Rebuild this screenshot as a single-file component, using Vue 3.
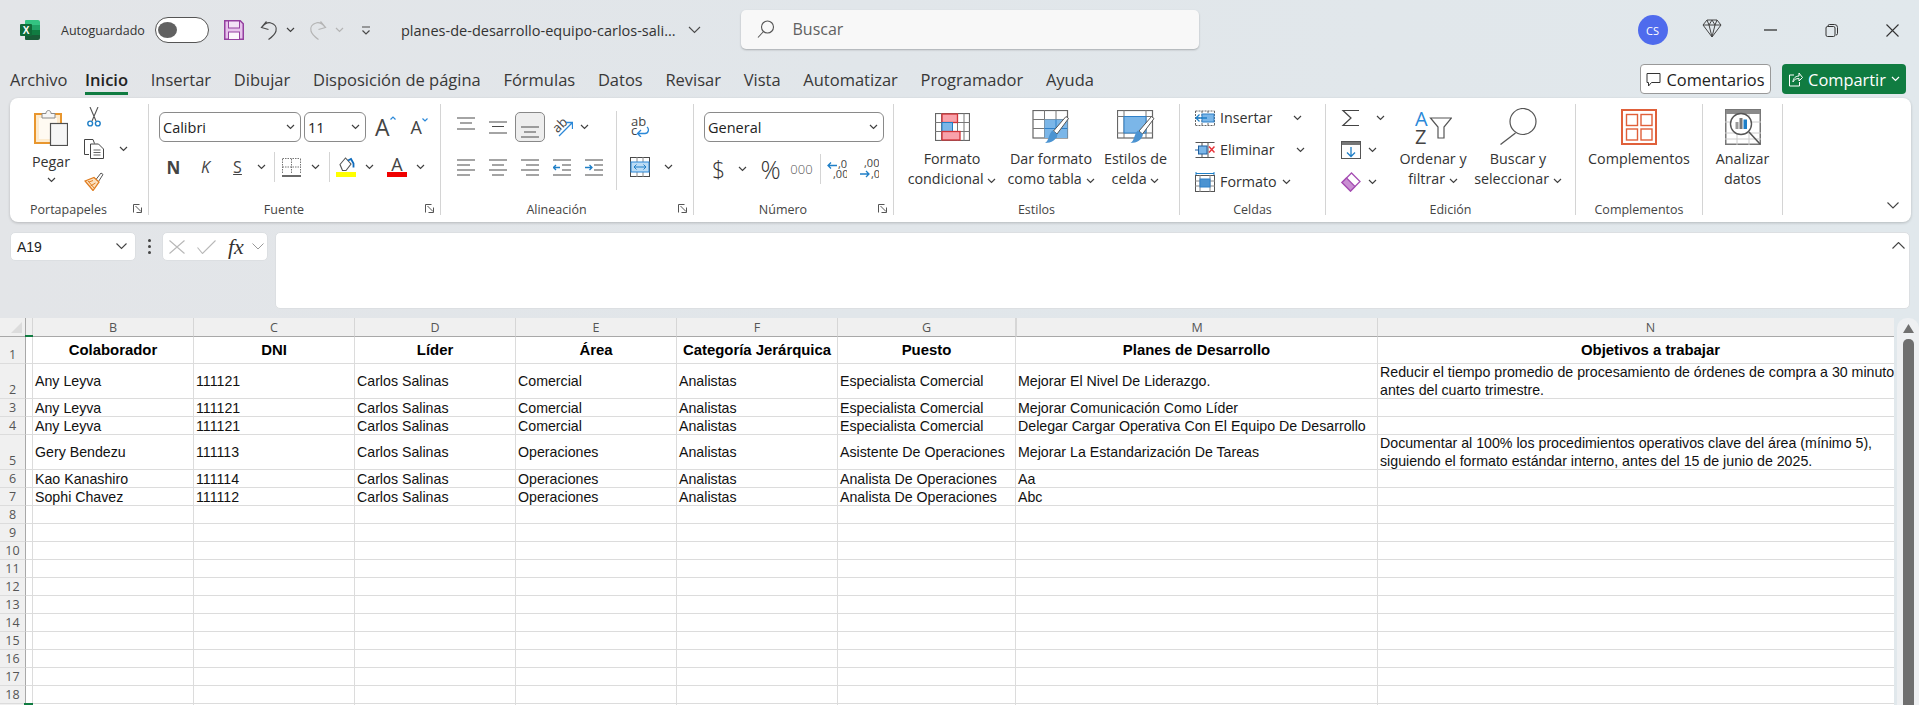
<script setup>
import { h } from 'vue'

const Chev = (p) =>
  h('svg', { width: 9, height: 6, viewBox: '0 0 9 6', class: 'chev' }, [
    h('path', { d: 'M1 1l3.5 3.5L8 1', fill: 'none', stroke: p.c || '#404040', 'stroke-width': 1.2 })
  ])
Chev.props = ['c']

const Ico = (p) =>
  h('svg', { width: p.w, height: p.h, viewBox: `0 0 ${p.w} ${p.h}` }, [
    h('path', { d: p.d, fill: 'none', stroke: p.s || '#4a4a4a', 'stroke-width': p.sw || 1.2 })
  ])
Ico.props = ['w', 'h', 'd', 's', 'sw']

const Launcher = () =>
  h('svg', { width: 10, height: 9, viewBox: '0 0 10 9', class: 'launcher' }, [
    h('path', { d: 'M.5 8.5V.5h6M2.5 2l5.5 5.5M8.5 3.5v5h-5', fill: 'none', stroke: '#555', 'stroke-width': 1 })
  ])

const tabs = ['Archivo', 'Inicio', 'Insertar', 'Dibujar', 'Disposición de página', 'Fórmulas', 'Datos', 'Revisar', 'Vista', 'Automatizar', 'Programador', 'Ayuda']

const rowHeads = ['1', '2', '3', '4', '5', '6', '7', '8', '9', '10', '11', '12', '13', '14', '15', '16', '17', '18', '19']
const colHeads = ['B', 'C', 'D', 'E', 'F', 'G', 'M', 'N']
const titles = ['Colaborador', 'DNI', 'Líder', 'Área', 'Categoría Jerárquica', 'Puesto', 'Planes de Desarrollo', 'Objetivos a trabajar']
const data = [
  ['Any Leyva', '111121', 'Carlos Salinas', 'Comercial', 'Analistas', 'Especialista Comercial', 'Mejorar El Nivel De Liderazgo.', 'Reducir el tiempo promedio de procesamiento de órdenes de compra a 30 minutos\nantes del cuarto trimestre.'],
  ['Any Leyva', '111121', 'Carlos Salinas', 'Comercial', 'Analistas', 'Especialista Comercial', 'Mejorar Comunicación Como Líder', ''],
  ['Any Leyva', '111121', 'Carlos Salinas', 'Comercial', 'Analistas', 'Especialista Comercial', 'Delegar Cargar Operativa Con El Equipo De Desarrollo', ''],
  ['Gery Bendezu', '111113', 'Carlos Salinas', 'Operaciones', 'Analistas', 'Asistente De Operaciones', 'Mejorar La Estandarización De Tareas', 'Documentar al 100% los procedimientos operativos clave del área (mínimo 5),\nsiguiendo el formato estándar interno, antes del 15 de junio de 2025.'],
  ['Kao Kanashiro', '111114', 'Carlos Salinas', 'Operaciones', 'Analistas', 'Analista De Operaciones', 'Aa', ''],
  ['Sophi Chavez', '111112', 'Carlos Salinas', 'Operaciones', 'Analistas', 'Analista De Operaciones', 'Abc', '']
]
while (data.length < 18) data.push(['', '', '', '', '', '', '', ''])
</script>

<template>
  <div class="app">
    <header class="titlebar">
      <svg class="t-excel" width="20" height="20" viewBox="0 0 20 20">
        <path d="M6 0h12a2 2 0 012 2v4H5V1a1 1 0 011-1z" fill="#33c481" />
        <rect x="5" y="5" width="15" height="5" fill="#21a366" />
        <rect x="5" y="10" width="15" height="5" fill="#107c41" />
        <path d="M5 15h15v3a2 2 0 01-2 2H6a1 1 0 01-1-1z" fill="#185c37" />
        <rect x="0" y="4" width="12" height="12" rx="1" fill="#0f6b38" />
        <text x="6" y="13.8" text-anchor="middle" class="t-x">X</text>
      </svg>
      <span class="t-auto">Autoguardado</span>
      <span class="toggle"><span class="knob"></span></span>
      <svg class="t-save" width="20" height="20" viewBox="0 0 20 20">
        <path d="M.75.75h15.500l3 3v15.500H.75z" fill="#e7c3ec" stroke="#94409f" stroke-width="1.500" />
        <rect x="4.500" y="1" width="11" height="7" fill="#f3e2f6" stroke="#94409f" />
        <rect x="4.500" y="12" width="11" height="7.500" fill="#fbf5fc" stroke="#94409f" />
      </svg>
      <Ico class="t-undo" :w="18" :h="20" d="M6.500 1.500L1.500 7.500l7 2M2 7c3-3.500 6-5 9-4 4 1.200 6 4.500 5 8-.8 3-4 6-7.500 8.500" />
      <Chev class="t-c1" />
      <Ico class="t-redo" :w="18" :h="20" s="#b4b4b4" d="M11.500 1.500l5 6-7 2M16 7c-3-3.500-6-5-9-4-4 1.200-6 4.500-5 8 .8 3 4 6 7.500 8.500" />
      <Chev class="t-c2" c="#b4b4b4" />
      <Ico class="t-cust" :w="10" :h="9" d="M1 1h8M1.500 4.500L5 8l3.500-3.500" />
      <span class="t-file">planes-de-desarrollo-equipo-carlos-sali...</span>
      <Ico class="t-filec" :w="13" :h="8" sw="1.100" d="M1 1l5.500 5.500L12 1" />
      <div class="search">
        <svg width="18" height="18" viewBox="0 0 18 18"><circle cx="10.500" cy="7" r="6" fill="none" stroke="#555" stroke-width="1.100" /><path d="M6.500 11.500L1 17.500" stroke="#555" stroke-width="1.100" /></svg>
        <span>Buscar</span>
      </div>
      <span class="avatar">CS</span>
      <svg class="t-gem" width="20" height="19" viewBox="0 0 20 19"><path d="M5 1h10l4 5-9 12L1 6zM1 6h18M7 6l3 12 3-12M5 1l2 5 3-5 3 5 2-5" fill="none" stroke="#444" stroke-width="1" /></svg>
      <Ico class="t-min" :w="13" :h="2" sw="1.300" s="#333" d="M0 1h13" />
      <svg class="t-rest" width="13" height="13" viewBox="0 0 13 13"><path d="M3 2.500V2a1.500 1.500 0 011.500-1.500h5A3 3 0 0112.500 3.500v6A1.500 1.500 0 0111 11M2.500 2.500h6A1.500 1.500 0 0110 4v7a1.500 1.500 0 01-1.500 1.500h-6A1.500 1.500 0 011 11V4a1.500 1.500 0 011.500-1.500z" fill="none" stroke="#333" /></svg>
      <Ico class="t-close" :w="13" :h="13" s="#333" sw="1.100" d="M.5.500l12 12M12.500.500l-12 12" />
    </header>

    <nav class="tabs">
      <a v-for="t in tabs" :key="t" class="tab" :class="{ active: t === 'Inicio' }">{{ t }}</a>
      <span class="comments">
        <svg width="15" height="15" viewBox="0 0 15 15"><path d="M1 1.500h13v9H5.500L2.500 14v-3.500H1z" fill="none" stroke="#333" /></svg>
        Comentarios
      </span>
      <span class="share">
        <svg width="15" height="16" viewBox="0 0 15 16"><path d="M6 4H1.500v11h10v-4M5 11c0-4 3-6 6-6V2l3.500 4.500L11 10V7.500c-3 0-5 1-6 3.500z" fill="none" stroke="#fff" /></svg>
        Compartir
        <Chev c="#fff" />
      </span>
    </nav>

    <section class="ribbon">
      <!-- Portapapeles -->
      <div class="group g-clip">
        <div class="body clip-body">
          <div class="paste">
            <svg width="34" height="38" viewBox="0 0 34 38">
              <rect x="1" y="6" width="26" height="29" fill="#fdebcf" stroke="#e8962e" stroke-width="2" />
              <rect x="5" y="10" width="18" height="21" fill="#fffaf2" />
              <path d="M8 10V5.500h4c0-4 5-4 5 0h4V10z" fill="#f6f6f6" stroke="#8a8a8a" />
              <rect x="16.500" y="15.500" width="17" height="22" fill="#f6f6f6" stroke="#505050" stroke-width="1.200" />
            </svg>
            <span class="lbl p-l">Pegar</span>
            <Chev />
          </div>
          <div class="clip-tools">
            <span class="ctool">
              <svg width="14" height="20" viewBox="0 0 14 20">
                <path d="M3 0l6 14M11 0L5 14" fill="none" stroke="#555" stroke-width="1.100" />
                <circle cx="3.200" cy="16.500" r="2.400" fill="none" stroke="#1f7fc7" stroke-width="1.400" />
                <circle cx="10.800" cy="16.500" r="2.400" fill="none" stroke="#1f7fc7" stroke-width="1.400" />
              </svg>
            </span>
            <span class="ctool">
              <svg width="20" height="20" viewBox="0 0 20 20">
                <path d="M5 15.500H.5V.5h8.500l1.500 4" fill="none" stroke="#444" />
                <path d="M6.500 5h8l5 5v9.500h-13z" fill="#fff" stroke="#444" />
                <path d="M9.500 11h7M9.500 13.500h7M9.500 16h7" stroke="#666" />
              </svg>
              <Chev class="c-copy" />
            </span>
            <span class="ctool">
              <svg width="20" height="19" viewBox="0 0 20 19">
                <path d="M12 7.500L17 1l2 1.500-4.500 7z" fill="#fff" stroke="#555" />
                <path d="M1 9l9-3.500 5 4.500-6 8.500L1 9z" fill="#fbe0bf" stroke="#e07c1e" stroke-width="1.300" />
                <path d="M5 10l4-1.500M6.500 14l5-3M4 9l7 8" stroke="#e07c1e" stroke-width="1" fill="none" />
              </svg>
            </span>
          </div>
        </div>
        <div class="g-label"><span>Portapapeles</span><Launcher /></div>
      </div>

      <!-- Fuente -->
      <div class="group g-font">
        <div class="body rows">
          <div class="row font-r1">
            <span class="select s-name"><span>Calibri</span><Chev /></span>
            <span class="select s-size"><span>11</span><Chev /></span>
            <span class="grow big-a">A<Ico :w="6" :h="4" s="#2b88d8" d="M.5 3.500L3 1l2.500 2.500" /></span>
            <span class="grow small-a">A<Ico :w="6" :h="4" s="#2b88d8" d="M.5.500L3 3 5.500.500" /></span>
          </div>
          <div class="row cols font-r2">
            <b class="fm-n">N</b>
            <i class="fm-k">K</i>
            <u class="fm-s">S</u>
            <Chev />
            <span class="vsep"></span>
            <svg width="19" height="19" viewBox="0 0 19 19">
              <path d="M.5 1v15M18.500 1v15M.5.500h18M.5 9h18M9.500 1v15" stroke="#777" stroke-dasharray="1.500 1" fill="none" />
              <path d="M0 18h19" stroke="#444" stroke-width="1.600" />
            </svg>
            <Chev />
            <span class="vsep"></span>
            <svg width="20" height="20" viewBox="0 0 20 20">
              <path d="M4 7.500L9.500 1l5.500 6-5 6.500H6.500z" fill="#fff" stroke="#555" stroke-width="1.100" />
              <path d="M12 3.500l3-1.500 2.500 4.500v4" fill="none" stroke="#0f6cbd" stroke-width="1.800" />
              <rect x="0" y="15" width="20" height="5" fill="#ffff00" />
            </svg>
            <Chev />
            <span class="fcolor">A<i></i></span>
            <Chev />
          </div>
        </div>
        <div class="g-label"><span>Fuente</span><Launcher /></div>
      </div>

      <!-- Alineación -->
      <div class="group g-align">
        <div class="body al-body">
          <div class="al-left rows">
            <div class="row cols al-r1">
              <Ico class="ia-top" :w="18" :h="13" d="M0 1h18M3 6h12M0 12h18" />
              <Ico :w="18" :h="13" d="M0 1h18M3 5.500h12M0 12h18" />
              <span class="pressed"><Ico :w="18" :h="12" d="M0 1h18M3 6h12M0 11h18" /></span>
              <svg width="20" height="22" viewBox="0 0 20 22">
                <text x="-1" y="14" transform="rotate(-45 6 9)" class="ab-t">ab</text>
                <path d="M6 20L19 7M13 6.500h6.500V13" fill="none" stroke="#2b88d8" stroke-width="1.300" />
              </svg>
              <Chev />
            </div>
            <div class="row cols al-r2">
              <Ico :w="18" :h="17" d="M0 1h18M0 6h13M0 11h18M0 16h13" />
              <Ico :w="18" :h="17" d="M0 1h18M3 6h12M0 11h18M3 16h12" />
              <Ico :w="18" :h="17" d="M0 1h18M5 6h13M0 11h18M5 16h13" />
              <svg width="18" height="17" viewBox="0 0 18 17"><path d="M0 1h18M9 6h9M9 11h9M0 16h18" stroke="#4a4a4a" stroke-width="1.200" fill="none" /><path d="M7 8.500H0M3 6L.5 8.500 3 11" stroke="#1f7fc7" stroke-width="1.300" fill="none" /></svg>
              <svg width="18" height="17" viewBox="0 0 18 17"><path d="M0 1h18M9 6h9M9 11h9M0 16h18" stroke="#4a4a4a" stroke-width="1.200" fill="none" /><path d="M0 8.500h7M4.500 6L7 8.500 4.500 11" stroke="#1f7fc7" stroke-width="1.300" fill="none" /></svg>
            </div>
          </div>
          <div class="al-right rows">
            <div class="row">
              <svg width="20" height="20" viewBox="0 0 20 20">
                <text x="1" y="9" class="ab-t">ab</text><text x="1" y="18" class="ab-t">c</text>
                <path d="M17 10c2.500 2 1.500 6.500-2 6.500H8M11 13l-3.500 3.500L11 20" fill="none" stroke="#2b88d8" stroke-width="1.300" />
              </svg>
            </div>
            <div class="row al-merge">
              <svg width="20" height="20" viewBox="0 0 20 20">
                <rect x=".5" y=".5" width="19" height="19" fill="#fff" stroke="#4a4a4a" />
                <path d="M7 0v5M13 0v5M7 15v5M13 15v5" stroke="#888" />
                <rect x="1" y="5" width="18" height="10" fill="#bcdcf5" stroke="#2b88d8" />
                <path d="M4 10h12M6.500 7.500L4 10l2.500 2.500M13.500 7.500L16 10l-2.500 2.500" fill="none" stroke="#1f7fc7" />
              </svg>
              <Chev class="merge-c" />
            </div>
          </div>
        </div>
        <div class="g-label"><span>Alineación</span><Launcher /></div>
      </div>

      <!-- Número -->
      <div class="group g-num">
        <div class="body rows">
          <div class="row">
            <span class="select s-gen"><span>General</span><Chev /></span>
          </div>
          <div class="row cols num-r2">
            <span class="n-dollar">$</span>
            <Chev />
            <span class="n-pct">%</span>
            <span class="n-000">000</span>
            <span class="vsep"></span>
            <svg width="20" height="20" viewBox="0 0 20 20">
              <text x="11" y="9" class="dec">,0</text><text x="6" y="19" class="dec">,00</text>
              <path d="M10 6.500H1M4 3.500l-3 3 3 3" fill="none" stroke="#1f7fc7" stroke-width="1.300" />
            </svg>
            <svg width="20" height="20" viewBox="0 0 20 20">
              <text x="5" y="8" class="dec">,00</text><text x="12" y="19" class="dec">,0</text>
              <path d="M1 15h9M7 12l3 3-3 3" fill="none" stroke="#1f7fc7" stroke-width="1.300" />
            </svg>
          </div>
        </div>
        <div class="g-label"><span>Número</span><Launcher /></div>
      </div>

      <!-- Estilos -->
      <div class="group g-styles">
        <div class="body bigs">
          <div class="big w-116">
            <span class="big-ic">
              <svg width="35" height="28" viewBox="0 0 35 28">
                <rect x=".5" y=".5" width="34" height="27" fill="#fff" stroke="#666" stroke-width="1.200" />
                <path d="M6.500 0v28M22.500 0v28M29 0v28M0 9.500h35M0 18.500h35" stroke="#777" />
                <rect x="7" y="1" width="15.500" height="8.500" fill="#f9a2aa" stroke="#d13438" stroke-width="1.300" />
                <rect x="7" y="9.500" width="10.500" height="9" fill="#7bb6e8" stroke="#1f7fc7" />
                <rect x="7" y="18.500" width="18" height="8.500" fill="#f9a2aa" stroke="#d13438" stroke-width="1.300" />
              </svg>
            </span>
            <span class="lbl">Formato</span>
            <span class="lbl">condicional <Chev /></span>
          </div>
          <div class="big w-82">
            <span class="big-ic">
              <svg width="38" height="34" viewBox="0 0 38 34">
                <rect x="1" y=".5" width="34.500" height="27.500" fill="#fff" stroke="#666" stroke-width="1.200" />
                <path d="M12.500 0v28M24 0v28M1 9.500h35M1 18.500h35" stroke="#777" />
                <rect x="12.500" y="9.500" width="23" height="18.500" fill="#7bb6e8" />
                <path d="M24 9.500V28M12.500 18.500h23" stroke="#2f80c8" />
                <path d="M36.500 8.500L25 24l-3.500-3L34 6.500z" fill="#fff" stroke="#555" />
                <path d="M20.500 20.500l5 4c-1 5-6 8.500-12.500 8.500 4-2 3.500-9.500 7.500-12.500z" fill="#4b93d1" />
              </svg>
            </span>
            <span class="lbl">Dar formato</span>
            <span class="lbl">como tabla <Chev /></span>
          </div>
          <div class="big w-87">
            <span class="big-ic">
              <svg width="38" height="34" viewBox="0 0 38 34">
                <rect x=".5" y=".5" width="35" height="27.500" fill="#fff" stroke="#666" stroke-width="1.200" />
                <path d="M7 0v28M29 0v28M0 6.500h36M0 23h36" stroke="#777" />
                <rect x="7" y="6.500" width="22" height="16.500" fill="#7bb6e8" stroke="#2f80c8" />
                <path d="M37 8.500L25.500 24 22 21 34.500 6.500z" fill="#fff" stroke="#555" />
                <path d="M21 20.500l5 4c-1 5-6 8.500-12.500 8.500 4-2 3.500-9.500 7.500-12.500z" fill="#4b93d1" />
              </svg>
            </span>
            <span class="lbl">Estilos de</span>
            <span class="lbl">celda <Chev /></span>
          </div>
        </div>
        <div class="g-label"><span>Estilos</span></div>
      </div>

      <!-- Celdas -->
      <div class="group g-cells">
        <div class="body stack">
          <div class="sitem">
            <svg width="20" height="18" viewBox="0 0 20 18"><path d="M.5 2h19M.5 16.500h19M0 9h20M7 2v15M13 2v15M.5 2v15M19.500 2v15" stroke="#666" fill="none" stroke-dasharray="2 1" /><rect x="7" y="5" width="12" height="8" fill="#7bb6e8" stroke="#2f80c8" /><path d="M12 9H1M4.500 5.500L1 9l3.500 3.500" fill="none" stroke="#1f7fc7" stroke-width="1.300" /></svg>
            <span class="lbl">Insertar</span><Chev class="c-ins" />
          </div>
          <div class="sitem">
            <svg width="20" height="18" viewBox="0 0 20 18"><path d="M.5 1.500h19M.5 16.500h19M7 1v16M13 1v16" stroke="#555" fill="none" /><rect x="3.500" y="5" width="8.500" height="8" fill="#7bb6e8" stroke="#1f5fa0" /><path d="M0 9h4" stroke="#1f5fa0" /><path d="M14 5.500l5.500 6M19.500 5.500l-5.500 6" stroke="#e8333a" stroke-width="1.500" /></svg>
            <span class="lbl">Eliminar</span><Chev class="c-ins" />
          </div>
          <div class="sitem">
            <svg width="20" height="20" viewBox="0 0 20 20"><rect x=".5" y="3.500" width="19" height="16" fill="#fff" stroke="#555" /><path d="M0 9h20M0 14h20M5 3v17M15 3v17" stroke="#888" /><rect x="5" y="7" width="10" height="8" fill="#4b93d1" stroke="#2f80c8" /><path d="M1 1.500h18M1 0v3M19 0v3" stroke="#1f7fc7" /></svg>
            <span class="lbl">Formato</span><Chev class="c-fmt" />
          </div>
        </div>
        <div class="g-label"><span>Celdas</span></div>
      </div>

      <!-- Edición -->
      <div class="group g-edit">
        <div class="body edit-body">
          <div class="stack edit-stack">
            <div class="sitem">
              <Ico :w="20" :h="18" s="#444" d="M18 1.500H2l8 7.500-8 7.500h16" />
              <Chev class="c-sig" />
            </div>
            <div class="sitem">
              <svg width="20" height="18" viewBox="0 0 20 18"><rect x=".5" y=".5" width="19" height="17" fill="#fff" stroke="#555" /><rect x="1" y="1" width="18" height="3" fill="#777" /><path d="M10 6v9M6 11.500l4 4 4-4" fill="none" stroke="#1f7fc7" stroke-width="1.300" /></svg>
              <Chev class="c-ed" />
            </div>
            <div class="sitem">
              <svg width="20" height="20" viewBox="0 0 20 20"><path d="M1 10.500L10.500 1 19 9.500 9.500 19z" fill="#fff" stroke="#a64fb3" stroke-width="1.300" /><path d="M1 10.500l4.500-4.500L14 14.500 9.500 19z" fill="#c98fd2" stroke="#a64fb3" stroke-width="1.300" /></svg>
              <Chev class="c-ed" />
            </div>
          </div>
          <div class="big w-86">
            <span class="big-ic">
              <svg width="37" height="34" viewBox="0 0 37 34">
                <text x="0" y="15.500" class="sort-a">A</text>
                <text x="0" y="33.500" class="sort-z">Z</text>
                <path d="M15.500 8h21L29 17v11h-6V17z" fill="#fff" stroke="#555" stroke-width="1.200" />
              </svg>
            </span>
            <span class="lbl">Ordenar y</span>
            <span class="lbl">filtrar <Chev /></span>
          </div>
          <div class="big w-84">
            <span class="big-ic">
              <svg width="37" height="37" viewBox="0 0 37 37"><circle cx="23" cy="13.500" r="13" fill="#fff" stroke="#555" stroke-width="1.200" /><path d="M15.500 25L.5 36.500" stroke="#555" stroke-width="1.300" /></svg>
            </span>
            <span class="lbl">Buscar y</span>
            <span class="lbl">seleccionar <Chev /></span>
          </div>
        </div>
        <div class="g-label"><span>Edición</span></div>
      </div>

      <!-- Complementos -->
      <div class="group g-addin">
        <div class="body bigs">
          <div class="big w-full">
            <span class="big-ic">
              <svg width="36" height="36" viewBox="0 0 36 36">
                <rect x="1" y="1" width="34" height="34" fill="#fff" stroke="#e0603a" stroke-width="2" />
                <rect x="5.500" y="5.500" width="11" height="11" fill="none" stroke="#e0603a" stroke-width="1.400" />
                <rect x="20" y="5.500" width="11" height="11" fill="none" stroke="#e0603a" stroke-width="1.400" />
                <rect x="5.500" y="20" width="11" height="11" fill="none" stroke="#e0603a" stroke-width="1.400" />
                <rect x="20" y="20" width="11" height="11" fill="none" stroke="#e0603a" stroke-width="1.400" />
              </svg>
            </span>
            <span class="lbl">Complementos</span>
          </div>
        </div>
        <div class="g-label"><span>Complementos</span></div>
      </div>

      <!-- Analizar -->
      <div class="group g-data">
        <div class="body bigs">
          <div class="big w-full">
            <span class="big-ic">
              <svg width="36" height="36" viewBox="0 0 36 36">
                <rect x=".75" y=".75" width="34.500" height="34.500" fill="#fff" stroke="#777" stroke-width="1.500" />
                <rect x="1" y="1" width="34" height="4" fill="#8a8a8a" />
                <path d="M0 13h36M0 24h36M0 30h36M12 5v31M24 5v31" stroke="#ccc" />
                <circle cx="16" cy="15" r="10.500" fill="#fff" stroke="#555" stroke-width="1.400" />
                <rect x="10.500" y="13" width="3" height="7" fill="#999" />
                <rect x="14.500" y="9" width="3" height="11" fill="#777" />
                <rect x="18.500" y="10.500" width="3.500" height="9.500" fill="#1f7fc7" />
                <path d="M24 23l11 12" stroke="#555" stroke-width="1.600" />
              </svg>
            </span>
            <span class="lbl">Analizar</span>
            <span class="lbl">datos</span>
          </div>
        </div>
      </div>

      <Ico class="collapse" :w="12" :h="7" s="#444" sw="1.100" d="M.5.500L6 6 11.500.500" />
    </section>

    <section class="formula">
      <div class="namebox"><span>A19</span><Ico :w="11" :h="7" s="#444" sw="1.100" d="M.5.500L5.500 5.500 10.500.500" /></div>
      <div class="fdots"><i></i><i></i><i></i></div>
      <div class="fxbox">
        <Ico :w="16" :h="14" s="#b8b8b8" sw="1.100" d="M.5.500l15 13M15.500.500l-15 13" />
        <Ico :w="19" :h="14" s="#b8b8b8" sw="1.100" d="M.5 7.500l5 6L18.500.500" />
        <span class="fx">fx</span>
        <Ico :w="12" :h="7" s="#999" sw="1" d="M.5.500L6 6 11.500.500" />
      </div>
      <div class="finput"><Ico :w="13" :h="7" s="#444" sw="1.100" d="M.5 6.500L6.500.500l6 6" /></div>
    </section>

    <section class="sheet">
      <div class="grid">
        <div class="corner"><svg width="11" height="11" viewBox="0 0 11 11"><path d="M11 0v11H0z" fill="#dcdcdc" /></svg></div>
        <div class="ch strip"></div>
        <div v-for="c in colHeads" :key="c" class="ch" :class="{ 'ch-m': c === 'M' }">{{ c }}</div>

        <div class="rh">1</div>
        <div class="cell strip"></div>
        <div v-for="t in titles" :key="t" class="cell title">{{ t }}</div>

        <template v-for="(r, i) in data" :key="i">
          <div class="rh">{{ rowHeads[i + 1] }}</div>
          <div class="cell strip"></div>
          <div v-for="(v, j) in r" :key="j" class="cell">{{ v }}</div>
        </template>
        <i class="head-mark"></i>
        <i class="sel-mark"></i>
      </div>
      <aside class="scroll">
        <svg width="11" height="9" viewBox="0 0 11 9"><path d="M5.500 0L11 9H0z" fill="#707070" /></svg>
        <span class="thumb"></span>
      </aside>
    </section>
  </div>
</template>

<style>
html, body { margin: 0; padding: 0; overflow: hidden; }
</style>

<style scoped>
.app {
  width: 1919px; height: 705px; overflow: hidden; display: flex; flex-direction: column;
  background: linear-gradient(90deg, #e3e5e8 0%, #e1e6ea 45%, #e1e8ec 100%);
  font-family: "Open Sans", "Noto Sans", sans-serif; color: #333;
}
/* title bar */
.titlebar { height: 60px; flex: none; display: flex; align-items: center; padding-left: 20px; }
.t-x { font: 700 10px "Liberation Sans", sans-serif; fill: #fff; }
.t-auto { margin-left: 21px; font-size: 12.500px; color: #333; width: 94px; white-space: nowrap; }
.toggle { width: 50px; height: 24px; border: 1px solid #555; border-radius: 13px; background: #fff; display: flex; align-items: center; padding-left: 2px; margin-right: 15px; box-sizing: content-box; }
.knob { width: 19px; height: 16px; border-radius: 50%; background: #616161; }
.t-undo { margin-left: 16px; }
.t-c1 { margin-left: 8px; }
.t-redo { margin-left: 14px; }
.t-c2 { margin-left: 8px; }
.t-cust { margin-left: 17px; }
.t-file { margin-left: 30px; width: 275px; font-size: 14.500px; white-space: nowrap; color: #333; }
.t-filec { margin-left: 12px; }
.search {
  margin-left: 39.500px; width: 458px; height: 39px; box-sizing: border-box; margin-top: -2px;
  background: #f8f8f8; border-radius: 5px; box-shadow: 0 1px 2px rgba(0,0,0,.25);
  display: flex; align-items: center; padding-left: 16px; gap: 18px; font-size: 16px; color: #616161;
}
.avatar { margin-left: 439px; width: 30px; height: 30px; border-radius: 50%; background: #4f6bed; color: #fff; font-size: 11px; display: flex; align-items: center; justify-content: center; }
.t-gem { margin-left: 34px; margin-top: -4px; }
.t-min { margin-left: 42px; }
.t-rest { margin-left: 48px; }
.t-close { margin-left: 48px; }

/* tabs */
.tabs { height: 38px; flex: none; display: flex; align-items: flex-start; padding-left: 10px; font-size: 16.500px; color: #333; }
.tab { margin-right: 22.700px; padding-top: 8px; height: 24px; line-height: 24px; white-space: nowrap; border-bottom: 3px solid transparent; box-sizing: content-box; color: #383838; }
.tab:first-child { margin-right: 17.500px; }
.tab.active { font-weight: 600; border-bottom-color: #107c41; color: #222; }
.comments {
  margin-left: auto; margin-top: 4px; width: 131px; height: 30px; box-sizing: border-box; border: 1px solid #999; border-radius: 4px; background: #fff;
  display: flex; align-items: center; justify-content: center; gap: 5px; font-size: 16.400px; color: #222;
}
.share {
  margin: 4px 13px 0 11px; width: 124px; height: 30px; box-sizing: border-box; border-radius: 4px; background: #107c41; color: #fff;
  display: flex; align-items: center; justify-content: center; gap: 5px; font-size: 16.400px;
}

/* ribbon */
.ribbon { height: 124px; flex: none; margin: 0 8px 0 10px; background: #fff; border-radius: 8px; box-shadow: 0 1px 3px rgba(0,0,0,.2); display: flex; padding: 6px 0 7px; box-sizing: border-box; position: relative; }
.group { display: flex; flex-direction: column; box-sizing: border-box; border-right: 1px solid #d4d4d4; flex: none; }
.g-clip { width: 139px; } .g-font { width: 292px; } .g-align { width: 253px; } .g-num { width: 200px; }
.g-styles { width: 286px; } .g-cells { width: 146px; } .g-edit { width: 250px; } .g-addin { width: 127px; } .g-data { width: 80px; }
.body { flex: 1; min-height: 0; }
.g-label { height: 14px; display: flex; align-items: center; font-size: 12.500px; color: #444; }
.g-label span { flex: 1; text-align: center; white-space: nowrap; padding-top: 2px; }
.launcher { margin: 0 5px 0 6px; flex: none; }
.lbl { font-size: 14.300px; line-height: 20px; color: #333; white-space: nowrap; }
.rows { padding: 8px 0 0 10px; display: flex; flex-direction: column; gap: 10px; box-sizing: border-box; }
.row { height: 30px; display: flex; align-items: center; }
.cols { display: grid; align-items: center; justify-items: center; }

/* clipboard */
.clip-body { display: flex; }
.paste { margin-left: 9px; width: 64px; display: flex; flex-direction: column; align-items: center; padding-top: 4px; }
.p-l { margin-top: 6px; }
.paste .chev { margin-top: 5px; }
.clip-tools { margin-left: 1px; display: flex; flex-direction: column; gap: 12px; padding-top: 3px; }
.ctool { height: 20px; display: flex; align-items: center; width: 60px; }
.ctool:first-child svg { margin-left: 3px; }
.c-copy { margin-left: 15px; }

/* font */
.select { height: 30px; box-sizing: border-box; border: 1px solid #8a8a8a; border-radius: 6px; display: flex; align-items: center; justify-content: space-between; padding: 0 5px 0 3px; font-size: 14.500px; color: #222; }
.s-name { width: 142px; } .s-size { width: 62px; margin-left: 3px; } .s-gen { width: 180px; }
.grow { display: flex; align-items: flex-start; line-height: 1; color: #444; }
.big-a { font-size: 23px; margin-left: 9px; }
.small-a { font-size: 18px; margin-left: 15px; }
.font-r2 { grid-template-columns: 29px 35px 29px 18px 8px 27px 20px 8px 26px 20px 36px 10px; }
.fm-n { font-size: 17px; color: #444; font-weight: 700; }
.fm-k { font-size: 16px; color: #444; }
.fm-s { font-size: 16px; color: #444; }
.vsep { width: 1px; height: 30px; background: #d4d4d4; }
.fcolor { display: flex; flex-direction: column; width: 20px; align-items: center; font-size: 18px; line-height: 15px; color: #444; height: 20px; }
.fcolor i { display: block; width: 20px; height: 5px; background: #f00000; margin-top: 0; flex: none; }

/* alignment */
.al-body { display: flex; }
.al-left { height: 78px; box-sizing: content-box; border-right: 1px solid #d4d4d4; padding-left: 8px; margin-top: 7px; padding-top: 1px; width: 167px; }
.al-r1 { grid-template-columns: 33px 32px 32px 33px 10px; }
.al-r2 { grid-template-columns: 33px 32px 32px 32px 32px; }
.ia-top { margin-bottom: 7px; }
.pressed { width: 30px; height: 30px; box-sizing: border-box; background: #eeeeee; border: 1px solid #888; border-radius: 5px; display: flex; align-items: flex-end; justify-content: center; padding-bottom: 3px; }
.ab-t { font: 13px "Open Sans", sans-serif; fill: #444; }
.al-right { padding-left: 13px; }
.merge-c { margin-left: 14px; }

/* number */
.num-r2 { grid-template-columns: 29px 18px 39px 23px 14px 19px 45px; }
.n-dollar { font-size: 23px; font-weight: 300; color: #333; }
.n-pct { font-size: 25px; font-weight: 300; color: #333; }
.n-000 { font-size: 13px; font-weight: 300; color: #555; }
.dec { font: 11px "Open Sans", sans-serif; fill: #444; }

/* styles */
.bigs { display: flex; }
.big { display: flex; flex-direction: column; align-items: center; flex: none; }
.big-ic { height: 45px; display: flex; align-items: center; }
.w-116 { width: 116px; } .w-82 { width: 82px; } .w-87 { width: 87px; } .w-86 { width: 86px; } .w-84 { width: 84px; } .w-full { width: 100%; }

/* cells / edit stack */
.stack { display: flex; flex-direction: column; gap: 12px; padding: 4px 0 0 15px; box-sizing: border-box; }
.sitem { height: 20px; display: flex; align-items: center; }
.sitem .lbl { margin-left: 5px; }
.c-ins { margin-left: 21px; } .c-fmt { margin-left: 5px; }
.edit-body { display: flex; }
.edit-stack { width: 64px; flex: none; }
.c-sig { margin-left: 15px; } .c-ed { margin-left: 7px; }
.sort-a { font: 20px "Open Sans", sans-serif; fill: #2b88d8; }
.sort-z { font: 20px "Open Sans", sans-serif; fill: #444; }
.collapse { position: absolute; right: 12px; bottom: 13px; }

/* formula bar */
.formula { height: 77px; flex: none; margin-top: 10px; display: flex; align-items: flex-start; padding: 0 9px 0 10px; }
.namebox { width: 126px; height: 29px; box-sizing: border-box; background: #fff; border-radius: 5px; border: 1px solid #dcdfe2; display: flex; align-items: center; justify-content: space-between; padding: 0 8px 0 6px; font: 14px "Liberation Sans", sans-serif; color: #222; }
.fdots { width: 26px; height: 29px; display: flex; flex-direction: column; align-items: center; justify-content: center; gap: 3px; }
.fdots i { width: 3px; height: 3px; background: #444; border-radius: 50%; }
.fxbox { width: 106px; height: 29px; box-sizing: border-box; background: #fff; border-radius: 5px; border: 1px solid #dcdfe2; display: flex; align-items: center; padding-left: 6px; }
.fxbox svg:nth-child(2) { margin-left: 12px; }
.fx { margin-left: 12px; font: italic 400 22px "Liberation Serif", serif; color: #333; width: 20px; line-height: 1; }
.fxbox svg:last-child { margin-left: 4px; }
.finput { flex: 1; margin-left: 7px; height: 77px; box-sizing: border-box; background: #fff; border-radius: 5px; border: 1px solid #dcdfe2; display: flex; justify-content: flex-end; padding: 9px 4px 0 0; }

/* sheet */
.sheet { flex: none; margin-top: 9px; height: 387px; display: flex; }
.grid {
  width: 1894px; height: 387px; overflow: hidden; background: #fff; position: relative; flex: none;
  display: grid;
  grid-template-columns: 26px 7px repeat(5, 161px) 178px 362px 546px;
  grid-template-rows: 19px 27px 35px 18px 18px 35px repeat(14, 18px);
  font: 14.200px "Liberation Sans", Arial, sans-serif; color: #111;
}
.corner { background: #f0f0f0; border-right: 1px solid #a8a8a8; border-bottom: 1px solid #a8a8a8; display: flex; align-items: flex-end; justify-content: flex-end; padding: 0 3px 3px 0; box-sizing: border-box; }
.ch { background: #f0f0f0; border-right: 1px solid #d6d6d6; border-bottom: 1px solid #a8a8a8; box-sizing: border-box; display: flex; align-items: center; justify-content: center; font: 12.500px "Open Sans", sans-serif; color: #555; }
.ch-m { border-left: 1px solid #d6d6d6; }
.rh { background: #f0f0f0; border-right: 1px solid #a8a8a8; border-bottom: 1px solid #dcdcdc; box-sizing: border-box; display: flex; align-items: flex-end; justify-content: center; font: 12.500px/17px "Open Sans", sans-serif; color: #555; }
.cell { border-right: 1px solid #dcdcdc; border-bottom: 1px solid #dcdcdc; box-sizing: border-box; display: flex; align-items: center; padding: 0 0 0 2px; overflow: hidden; white-space: pre; line-height: 18px; }
.title { font-weight: 700; justify-content: center; font-size: 14.900px; padding: 0; color: #000; }
.head-mark { position: absolute; left: 25px; top: 17px; width: 8px; height: 2px; background: #107c41; }
.sel-mark { position: absolute; left: 24px; top: 385px; width: 9px; height: 2px; background: #107c41; }

/* scrollbar */
.scroll { margin-left: 3px; width: 22px; background: #eef0f2; border-radius: 10px 10px 0 0; display: flex; flex-direction: column; align-items: center; padding-top: 6px; box-sizing: border-box; }
.thumb { margin-top: 6px; width: 11px; flex: 1; background: #6f6f6f; border-radius: 5px 5px 0 0; }
</style>
